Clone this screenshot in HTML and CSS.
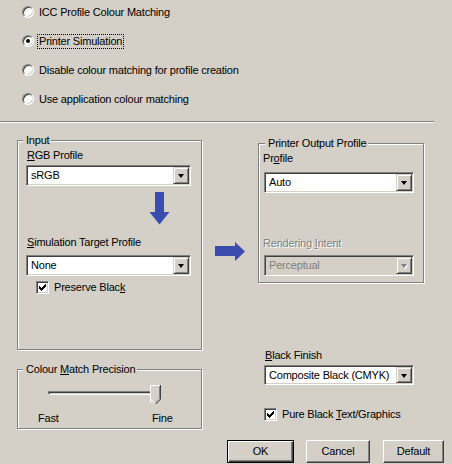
FILE: index.html
```html
<!DOCTYPE html>
<html>
<head>
<meta charset="utf-8">
<title>Colour Matching</title>
<link rel="stylesheet" href="styles.css">
</head>
<body>
<div class="dialog">
  <div class="radios">
    <div class="opt"><span class="radio"></span><span class="txt">ICC Profile Colour Matching</span></div>
    <div class="opt"><span class="radio on"></span><span class="txt focus">Printer Simulation</span></div>
    <div class="opt"><span class="radio"></span><span class="txt">Disable colour matching for profile creation</span></div>
    <div class="opt"><span class="radio"></span><span class="txt">Use application colour matching</span></div>
  </div>
  <div class="sep"></div>

  <div class="lower">
    <div class="col-left">
      <div class="group g-input">
        <span class="legend">Input</span>
        <div class="lbl l-rgb"><u>R</u>GB Profile</div>
        <div class="combo c-rgb"><span class="val">sRGB</span><span class="drop"><span class="tri"></span></span></div>
        <svg class="arrow-down" width="20" height="33" viewBox="0 0 20 33"><path d="M5 0H14V20H19.5L9.5 32.5L-0.5 20H5Z" fill="#3a4cad"/></svg>
        <div class="lbl l-sim"><u>S</u>imulation Target Profile</div>
        <div class="combo c-sim"><span class="val">None</span><span class="drop"><span class="tri"></span></span></div>
        <div class="chk-row r-pres"><span class="chk"><svg width="7" height="7" viewBox="0 0 7 7"><path d="M0 2H1V3H2V4H3V3H4V2H5V1H6V0H7V3H6V4H5V5H4V6H3V7H2V6H1V5H0Z" fill="#000"/></svg></span><span class="ctxt">Preserve Blac<u>k</u></span></div>
      </div>
      <div class="group g-prec">
        <span class="legend">Colour <u>M</u>atch Precision</span>
        <div class="slider">
          <div class="track"></div>
          <svg class="thumb" width="11" height="19" viewBox="0 0 11 19">
            <path d="M0 0H11V14L6 19H5L0 14Z" fill="#d4d0c8"/>
            <path d="M0.5 18V0.5H10" stroke="#fff" fill="none"/>
            <path d="M10.5 0V14.3L5.8 19" stroke="#404040" fill="none"/>
            <path d="M9.5 1V13.8L5.5 17.8" stroke="#808080" fill="none"/>
            <path d="M0.5 14L4.5 18" stroke="#fff" fill="none"/>
          </svg>
        </div>
        <div class="ticks"><span class="t-fast">Fast</span><span>Fine</span></div>
      </div>
    </div>

    <div class="col-mid">
      <svg class="arrow-right" width="30" height="19" viewBox="0 0 30 19"><path d="M0 4H20V0L30 9.5L20 19V14H0Z" fill="#3a4cad"/></svg>
    </div>

    <div class="col-right">
      <div class="group g-out">
        <span class="legend">Printer Output Profile</span>
        <div class="lbl l-prof">Pr<u>o</u>file</div>
        <div class="combo c-auto"><span class="val">Auto</span><span class="drop"><span class="tri"></span></span></div>
        <div class="lbl l-rend disabled">Rendering <u>I</u>ntent</div>
        <div class="combo c-perc disabled"><span class="val">Perceptual</span><span class="drop"><span class="tri"></span></span></div>
      </div>
      <div class="lbl l-black"><u>B</u>lack Finish</div>
      <div class="combo c-black"><span class="val">Composite Black (CMYK)</span><span class="drop"><span class="tri"></span></span></div>
      <div class="chk-row r-pure"><span class="chk"><svg width="7" height="7" viewBox="0 0 7 7"><path d="M0 2H1V3H2V4H3V3H4V2H5V1H6V0H7V3H6V4H5V5H4V6H3V7H2V6H1V5H0Z" fill="#000"/></svg></span><span class="ctxt">Pure Black <u>T</u>ext/Graphics</span></div>
    </div>
  </div>

  <div class="buttons">
    <div class="btn b-ok default"><span>OK</span></div>
    <div class="btn b-cancel"><span>Cancel</span></div>
    <div class="btn b-def"><span>Default</span></div>
  </div>
</div>
</body>
</html>
```

FILE: styles.css
```css
html, body {
  margin: 0;
  padding: 0;
  background: #d4d0c8;
}
body {
  font-family: "Liberation Sans", Arial, sans-serif;
  font-size: 11px;
  line-height: 13px;
  letter-spacing: -0.2px;
  color: #000;
}
u {
  text-decoration: underline;
  text-underline-offset: 1px;
}
.dialog {
  width: 452px;
  height: 464px;
  overflow: hidden;
}

/* radio options */
.radios {
  display: flex;
  flex-direction: column;
  gap: 13px;
  padding: 4px 0 0 22px;
}
.opt {
  display: flex;
  align-items: center;
  height: 16px;
}
.radio {
  box-sizing: border-box;
  width: 12px;
  height: 12px;
  border-radius: 50%;
  background: #fff;
  border: 1px solid;
  border-color: #808080 #ffffff #ffffff #808080;
  box-shadow: inset 1px 1px 0 #404040, inset -1px -1px 0 #d4d0c8;
  margin-right: 3px;
  display: flex;
  align-items: center;
  justify-content: center;
}
.radio.on::after {
  content: "";
  width: 4px;
  height: 4px;
  border-radius: 50%;
  background: #000;
}
.txt {
  border: 1px solid transparent;
  padding: 0 1px;
  line-height: 13px;
}
.txt.focus {
  border: 1px dotted #000;
}

.sep {
  width: 434px;
  margin-top: 14px;
  border-top: 1px solid #808080;
  border-bottom: 1px solid #ffffff;
}

/* lower area */
.lower {
  display: flex;
  align-items: flex-start;
}
.col-left {
  margin-left: 17px;
  display: flex;
  flex-direction: column;
}
.col-mid {
  width: 56px;
}
.col-right {
  display: flex;
  flex-direction: column;
  align-items: flex-start;
}

.group {
  position: relative;
  box-sizing: border-box;
  border: 1px solid #808080;
  box-shadow: 1px 1px 0 #ffffff, inset 1px 1px 0 #ffffff;
  display: flex;
  flex-direction: column;
  align-items: flex-start;
}
.legend {
  position: absolute;
  top: -7px;
  left: 5px;
  padding: 0 2px 0 3px;
  background: #d4d0c8;
  line-height: 13px;
  white-space: nowrap;
}

.g-input {
  margin-top: 17px;
  width: 185px;
  height: 210px;
  padding: 8px 0 0 8px;
}
.lbl {
  line-height: 13px;
  white-space: nowrap;
}
.l-rgb { margin-left: 1px; }
.c-rgb { margin-top: 3px; }
.arrow-down {
  display: block;
  margin: 6px 0 0 124px;
}
.l-sim { margin: 11px 0 0 1px; }
.c-sim { margin-top: 6px; }
.r-pres { margin: 5px 0 0 10px; }

/* combo box */
.combo {
  box-sizing: border-box;
  width: 165px;
  height: 21px;
  background: #fff;
  border: 1px solid;
  border-color: #808080 #ffffff #ffffff #808080;
  box-shadow: inset 1px 1px 0 #404040, inset -1px -1px 0 #d4d0c8;
  padding: 1px;
  display: flex;
  align-items: center;
}
.combo .val {
  flex: 1;
  padding-left: 3px;
  white-space: nowrap;
  overflow: hidden;
}
.combo .drop {
  box-sizing: border-box;
  width: 16px;
  height: 17px;
  background: #d4d0c8;
  border: 1px solid;
  border-color: #d4d0c8 #404040 #404040 #d4d0c8;
  box-shadow: inset 1px 1px 0 #ffffff, inset -1px -1px 0 #808080;
  display: flex;
  align-items: center;
  justify-content: center;
}
.tri {
  width: 0;
  height: 0;
  border-left: 3.5px solid transparent;
  border-right: 3.5px solid transparent;
  border-top: 4px solid #000;
  margin-top: 1px;
}
.combo.disabled {
  background: #d4d0c8;
  color: #808080;
}
.combo.disabled .tri {
  border-top-color: #808080;
  filter: drop-shadow(1px 1px 0 #ffffff);
}
.lbl.disabled {
  color: #808080;
  text-shadow: 1px 1px 0 #ffffff;
}

/* checkbox */
.chk-row {
  display: flex;
  align-items: center;
}
.chk {
  box-sizing: border-box;
  width: 13px;
  height: 13px;
  background: #fff;
  border: 1px solid;
  border-color: #808080 #ffffff #ffffff #808080;
  box-shadow: inset 1px 1px 0 #404040, inset -1px -1px 0 #d4d0c8;
  display: flex;
  align-items: center;
  justify-content: center;
  margin-right: 5px;
}
.chk svg { display: block; }
.ctxt {
  line-height: 13px;
  white-space: nowrap;
}

/* precision */
.g-prec {
  margin-top: 19px;
  width: 185px;
  height: 60px;
  padding: 15px 0 0 30px;
}
.slider {
  display: flex;
  align-items: flex-start;
  height: 19px;
}
.track {
  box-sizing: border-box;
  width: 104px;
  height: 4px;
  margin-top: 6px;
  border-top: 1px solid #808080;
  border-left: 1px solid #808080;
  border-bottom: 1px solid #ffffff;
  border-right: 1px solid #ffffff;
  box-shadow: inset 1px 1px 0 #404040;
  background: #d4d0c8;
}
.thumb {
  display: block;
  margin-left: -2px;
}
.ticks {
  display: flex;
  margin: 8px 0 0 -10px;
  line-height: 13px;
}
.t-fast {
  width: 114px;
}

/* arrow between */
.arrow-right {
  display: block;
  margin: 119px 0 0 13px;
}

/* printer output */
.g-out {
  margin-top: 20px;
  width: 166px;
  height: 140px;
  padding: 8px 0 0 0;
}
.g-out .legend { left: 6px; }
.l-prof { margin-left: 4px; }
.c-auto { margin: 7px 0 0 5px; width: 150px; }
.l-rend { margin: 44px 0 0 4px; }
.c-perc { margin: 5px 0 0 5px; width: 150px; }

.l-black { margin: 66px 0 0 7px; }
.c-black { margin: 3px 0 0 6px; width: 150px; height: 20px; }
.c-black .drop { height: 16px; }
.r-pure { margin: 23px 0 0 6px; }

/* buttons */
.buttons {
  display: flex;
  justify-content: flex-end;
  margin-top: 11px;
  padding-right: 8px;
}
.btn {
  box-sizing: border-box;
  height: 23px;
  background: #d4d0c8;
  border: 1px solid;
  border-color: #ffffff #404040 #404040 #ffffff;
  box-shadow: inset -1px -1px 0 #808080, inset 1px 1px 0 #d4d0c8;
  display: flex;
  align-items: center;
  justify-content: center;
}
.btn.default {
  border: 1px solid #000;
  box-shadow: inset 1px 1px 0 #ffffff, inset -1px -1px 0 #404040, inset -2px -2px 0 #808080;
}
.b-ok { width: 67px; }
.b-cancel { width: 64px; margin-left: 12px; }
.b-def { width: 61px; margin-left: 13px; }
```
